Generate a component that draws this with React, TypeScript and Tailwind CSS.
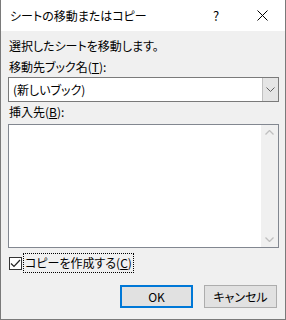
import React from "react";

const font = {
  fontFamily: '"Noto Sans CJK JP", "Noto Sans", sans-serif',
};

export default function App() {
  return (
    <div
      className="w-[286px] h-[320px] flex flex-col bg-[#f0f0f0] border-x border-b border-[#7a7a7a] text-[12px] leading-none text-black [font-feature-settings:'palt'] overflow-hidden"
      style={font}
    >
      {/* title bar */}
      <div className="h-[31px] bg-white flex items-center shrink-0">
        <span className="ml-[9px] flex-1">シートの移動またはコピー</span>
        <span className="w-[46px] text-center text-[13px]">?</span>
        <span className="w-[46px] flex justify-center">
          <svg width="11" height="11" viewBox="0 0 11 11" stroke="#000" strokeWidth="1">
            <path d="M0.5 0.5 L10.5 10.5 M10.5 0.5 L0.5 10.5" />
          </svg>
        </span>
      </div>

      <div className="flex flex-col px-[7px]">
        <div className="mt-[9px] ml-[1px]">選択したシートを移動します。</div>
        <div className="mt-[9px] ml-[1px]">
          移動先ブック名(<span className="underline">T</span>):
        </div>

        {/* combo box */}
        <div className="mt-[4px] h-[25px] w-[271px] flex bg-white border border-[#7a7a7a]">
          <span className="flex-1 flex items-center pl-[4px]">(新しいブック)</span>
          <span className="w-[16px] flex items-center justify-center bg-[#e5e5e5] border-l border-[#c0c0c0]">
            <svg width="9" height="5" viewBox="0 0 9 5" fill="none" stroke="#606060" strokeWidth="1">
              <path d="M0.5 0.5 L4.5 4.5 L8.5 0.5" />
            </svg>
          </span>
        </div>

        <div className="mt-[4px] ml-[1px]">
          挿入先(<span className="underline">B</span>):
        </div>

        {/* list box */}
        <div className="mt-[6px] h-[124px] w-[271px] flex bg-white border border-[#828790]">
          <div className="flex-1" />
          <div className="w-[17px] bg-[#f0f0f0] flex flex-col items-center justify-between py-[5px]">
            <svg width="9" height="5" viewBox="0 0 9 5" fill="none" stroke="#bfbfbf" strokeWidth="1.3">
              <path d="M0.5 4.5 L4.5 0.5 L8.5 4.5" />
            </svg>
            <svg width="9" height="5" viewBox="0 0 9 5" fill="none" stroke="#bfbfbf" strokeWidth="1.3">
              <path d="M0.5 0.5 L4.5 4.5 L8.5 0.5" />
            </svg>
          </div>
        </div>

        {/* checkbox */}
        <div className="mt-[5px] flex items-center">
          <span className="ml-[1px] w-[13px] h-[13px] bg-white border border-[#333] flex items-center justify-center">
            <svg width="11" height="9" viewBox="0 0 11 9" fill="none" stroke="#222" strokeWidth="1.2">
              <path d="M1 4.5 L4 7.5 L10 1" />
            </svg>
          </span>
          <span className="ml-[1px] px-[1px] py-[3px] border border-dotted border-black">
            コピーを作成する(<span className="underline">C</span>)
          </span>
        </div>

        {/* buttons */}
        <div className="mt-[12px] flex justify-end gap-[11px] pr-[1px]">
          <button className="w-[73px] h-[23px] bg-[#e1e1e1] border-2 border-[#0078d7] text-[12px]">
            OK
          </button>
          <button className="w-[73px] h-[23px] bg-[#e1e1e1] border border-[#adadad] text-[12px]">
            キャンセル
          </button>
        </div>
      </div>
    </div>
  );
}
